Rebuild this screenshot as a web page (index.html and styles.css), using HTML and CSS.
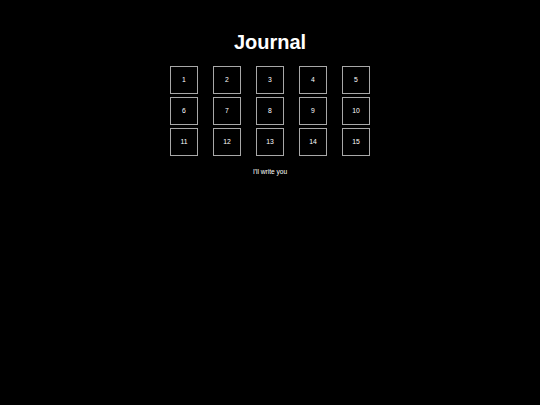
FILE: index.html
```html
<!DOCTYPE html>
<html>
<head>
<meta charset="utf-8">
<link rel="stylesheet" href="styles.css">
</head>
<body>
<main class="page">
  <h1 class="title">Journal</h1>
  <div class="grid">
    <div class="cell">1</div>
    <div class="cell">2</div>
    <div class="cell">3</div>
    <div class="cell">4</div>
    <div class="cell">5</div>
    <div class="cell">6</div>
    <div class="cell">7</div>
    <div class="cell">8</div>
    <div class="cell">9</div>
    <div class="cell">10</div>
    <div class="cell">11</div>
    <div class="cell">12</div>
    <div class="cell">13</div>
    <div class="cell">14</div>
    <div class="cell">15</div>
  </div>
  <p class="note">I'll write you</p>
</main>
</body>
</html>
```
FILE: styles.css
```css
html, body {
  margin: 0;
  padding: 0;
  background: #000;
  color: #fff;
  font-family: "Liberation Sans", Arial, sans-serif;
}
.page {
  display: flex;
  flex-direction: column;
  align-items: center;
  padding-top: 31px;
}
.title {
  margin: 0;
  font-size: 20px;
  line-height: 23px;
  font-weight: bold;
}
.grid {
  margin-top: 12px;
  display: grid;
  grid-template-columns: repeat(5, 28px);
  grid-auto-rows: 28px;
  column-gap: 15px;
  row-gap: 3px;
}
.cell {
  box-sizing: border-box;
  border: 1px solid #a8a8a8;
  display: flex;
  align-items: center;
  justify-content: center;
  font-size: 6.8px;
  line-height: 8px;
}
.note {
  margin: 12px 0 0;
  font-size: 6.6px;
  line-height: 8px;
}
```
